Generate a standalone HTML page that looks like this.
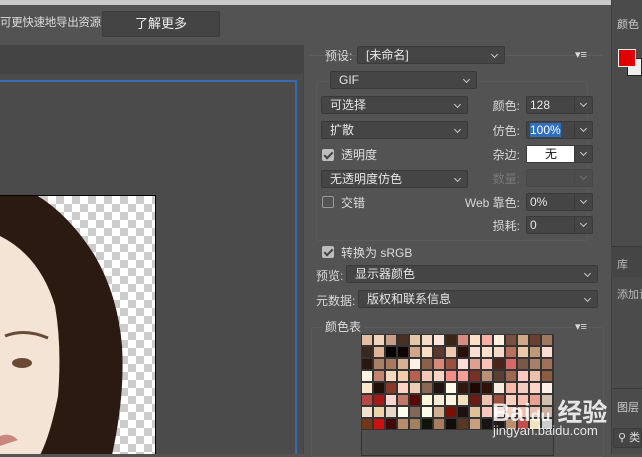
<!DOCTYPE html><html><head><meta charset="utf-8"><style>
*{margin:0;padding:0;box-sizing:border-box}
body{width:642px;height:454px;overflow:hidden;background:#535353;font-family:"Liberation Sans","Noto Sans CJK SC",sans-serif;color:#ddd;font-size:12px;position:relative}
.a{position:absolute}
.dd{position:absolute;background:#454545;border:1px solid #3a3a3a;border-radius:2px;height:18px;line-height:16px;padding-left:8px;color:#e6e6e6;font-size:12px}
.dd:after{content:"";position:absolute;right:7px;top:5px;width:4px;height:4px;border-right:1px solid #ccc;border-bottom:1px solid #ccc;transform:rotate(45deg)}
.cb{position:absolute;background:#454545;border:1px solid #3a3a3a;border-radius:2px;height:18px;line-height:16px;padding-left:3px;color:#e6e6e6}
.cb .b{position:absolute;right:0;top:0;width:18px;height:16px;border-left:1px solid #3a3a3a}
.cb .b:after{content:"";position:absolute;left:6px;top:4px;width:4px;height:4px;border-right:1px solid #ccc;border-bottom:1px solid #ccc;transform:rotate(45deg)}
.lb{position:absolute;color:#d8d8d8;font-size:12px;text-align:right}
.chk{position:absolute;width:12px;height:12px;border-radius:2px;background:#bdbdbd}
.chk:after{content:"";position:absolute;left:4px;top:1px;width:3px;height:7px;border-right:2px solid #444;border-bottom:2px solid #444;transform:rotate(45deg)}
#grid{position:absolute;left:361px;top:334px;width:193px;display:grid;grid-template-columns:repeat(16,12px);grid-auto-rows:12px;background:#333;gap:0}
#grid div{border:0.5px solid #333}
</style></head><body>
<div class="a" style="left:0;top:0;width:611px;height:5px;background:#c9c9c9"></div>
<div class="a" style="left:0;top:14px;color:#ddd;font-size:11.5px;letter-spacing:-0.3px">可更快速地导出资源</div>
<div class="a" style="left:102px;top:11px;width:118px;height:26px;background:#444;border:1px solid #3d3d3d;border-radius:2px;text-align:center;line-height:24px;font-size:13px;color:#eee">了解更多</div>
<div class="a" style="left:0;top:45px;width:304px;height:29px;background:#444"></div>
<div class="a" style="left:0;top:74px;width:304px;height:380px;background:#4b4b4b"></div>
<div class="a" style="left:0;top:80px;width:297px;height:374px;border-top:2px solid #3a6ab0;border-right:2px solid #3a6ab0"></div>
<div class="a" style="left:303px;top:45px;width:1px;height:409px;background:#444"></div>
<div class="a" style="left:0;top:195px;width:156px;height:259px;border-top:1px solid #000;border-right:1px solid #000;background-color:#fff;background-image:linear-gradient(45deg,#ccc 25%,transparent 25%,transparent 75%,#ccc 75%),linear-gradient(45deg,#ccc 25%,transparent 25%,transparent 75%,#ccc 75%);background-size:16px 16px;background-position:0 0,8px 8px;overflow:hidden">
<svg width="156" height="259" style="position:absolute;left:0;top:0"><path d="M0 0 L38 0 Q70 20 95 60 Q118 100 122 150 Q125 200 112 259 L0 259Z" fill="#2a1a12"/><path d="M0 40 Q40 60 55 110 Q62 150 58 200 Q50 240 40 259 L0 259Z" fill="#f3e4d6"/><ellipse cx="22" cy="167" rx="10" ry="5" fill="#6a4a34"/><path d="M5 140 Q25 132 48 142" stroke="#6a4a34" stroke-width="3" fill="none"/><path d="M0 240 Q10 236 18 244 L0 250Z" fill="#c88880"/></svg></div>
<div class="a" style="left:305px;top:5px;width:306px;height:449px;background:#535353"></div>
<div class="a" style="left:310px;top:55px;width:292px;height:1px;background:#5e5e5e"></div>
<div class="lb" style="left:325px;top:47px">预设:</div>
<div class="dd" style="left:357px;top:46px;width:148px">[未命名]</div>
<div class="a" style="left:575px;top:48px;font-size:11px;color:#ddd">▾≡</div>
<div class="a" style="left:316px;top:81px;width:272px;height:160px;border:1px solid #5a5a5a;border-radius:3px"></div>
<div class="dd" style="left:330px;top:71px;width:147px">GIF</div>
<div class="dd" style="left:321px;top:96px;width:147px">可选择</div>
<div class="dd" style="left:321px;top:121px;width:147px">扩散</div>
<div class="chk" style="left:322px;top:149px"></div><div class="a" style="left:341px;top:146px">透明度</div>
<div class="dd" style="left:321px;top:170px;width:147px">无透明度仿色</div>
<div class="a" style="left:322px;top:196px;width:12px;height:12px;border:1px solid #999;border-radius:2px"></div><div class="a" style="left:341px;top:194px">交错</div>
<div class="lb" style="left:460px;top:97px;width:60px">颜色:</div>
<div class="cb" style="left:526px;top:96px;width:67px">128<div class="b"></div></div>
<div class="lb" style="left:460px;top:122px;width:60px">仿色:</div>
<div class="cb" style="left:526px;top:121px;width:67px"><span style="background:#2f6fc0;color:#fff">100%</span><div class="b"></div></div>
<div class="lb" style="left:460px;top:146px;width:60px">杂边:</div>
<div class="cb" style="left:526px;top:145px;width:67px;padding:0"><span style="display:block;width:48px;height:16px;background:#fff;color:#111;text-align:center">无</span><div class="b"></div></div>
<div class="lb" style="left:460px;top:170px;width:60px;color:#777">数量:</div>
<div class="cb" style="left:526px;top:169px;width:67px;background:#4d4d4d;border-color:#474747"><div class="b" style="opacity:.3"></div></div>
<div class="lb" style="left:444px;top:194px;width:76px">Web 靠色:</div>
<div class="cb" style="left:526px;top:193px;width:67px">0%<div class="b"></div></div>
<div class="lb" style="left:460px;top:217px;width:60px">损耗:</div>
<div class="cb" style="left:526px;top:216px;width:67px">0<div class="b"></div></div>
<div class="chk" style="left:322px;top:246px"></div><div class="a" style="left:341px;top:244px">转换为 sRGB</div>
<div class="lb" style="left:316px;top:267px">预览:</div>
<div class="dd" style="left:346px;top:265px;width:252px">显示器颜色</div>
<div class="lb" style="left:316px;top:292px">元数据:</div>
<div class="dd" style="left:358px;top:290px;width:240px">版权和联系信息</div>
<div class="a" style="left:311px;top:327px;width:293px;height:130px;border:1px solid #5a5a5a;border-radius:3px"></div>
<div class="a" style="left:322px;top:318px;background:#535353;padding:0 3px">颜色表</div>
<div class="a" style="left:575px;top:320px;font-size:11px;background:#535353">▾≡</div>
<div class="a" style="left:361px;top:334px;width:193px;height:122px;border:1px solid #333;background:#4f4f4f"></div>
<div id="grid"></div>
<div class="a" style="left:611px;top:0;width:31px;height:454px;background:#4b4b4b;border-left:1px solid #3e3e3e"></div>
<div class="a" style="left:617px;top:16px;font-size:11px;color:#ccc">颜色</div>
<div class="a" style="left:627px;top:58px;width:15px;height:18px;background:#eee;border:1px solid #222"></div>
<div class="a" style="left:618px;top:49px;width:18px;height:18px;background:#e00000;border:1px solid #eee"></div>
<div class="a" style="left:611px;top:246px;width:31px;height:1px;background:#3a3a3a"></div>
<div class="a" style="left:611px;top:247px;width:31px;height:30px;background:#454545"></div>
<div class="a" style="left:617px;top:256px;font-size:11px;color:#bbb">库</div>
<div class="a" style="left:617px;top:286px;font-size:11px;color:#bbb;white-space:nowrap">添加设</div>
<div class="a" style="left:611px;top:388px;width:31px;height:1px;background:#3a3a3a"></div>
<div class="a" style="left:617px;top:399px;font-size:11px;color:#ccc">图层</div>
<div class="a" style="left:613px;top:428px;width:29px;height:20px;background:#454545;border:1px solid #3a3a3a;border-radius:2px;font-size:11px;padding-left:4px;line-height:18px;white-space:nowrap">⚲ 类</div>
<div class="a" style="left:492px;top:393px;font-size:25px;font-weight:bold;color:rgba(255,255,255,.85);white-space:nowrap">Bai<span style="font-size:16px">du</span> 经验</div>
<div class="a" style="left:493px;top:423px;font-size:13px;color:rgba(255,255,255,.85)">jingyan.baidu.com</div>
<script>
var c="e3bca2 f0d4bb c8a08a 4a3024 e6c4a8 f5dcc4 fde6d8 3a2418 d88c80 fce0c8 f8b0a4 fff0e0 7a5040 d0a888 6a4030 a07860 3a2820 e0b498 050000 100400 d4a488 f8dcc4 5a3a2c ecc8b0 2a1008 fde0d4 fce0cc f8d8c8 b87060 e8c8a8 c09878 fcdcd0 2a1810 a88068 a87860 d8b094 fff0e4 8a6048 d88878 985040 fcdcd4 e0a090 fcc0b4 4a2418 d86868 7a5848 a88068 a07058 fff4e4 c08470 f8d8c0 f4ccb0 b86050 f4c8b4 fcd4c4 f48c88 f4a098 7a3024 b89078 5a4034 a06850 fcc8c0 ecc0ac 8a5c40 fde4cc 201008 8a3828 fcd4c4 ecccb4 8a6854 201410 fffcec 301810 200800 301008 f8ece0 f8b8a8 f4ccc0 fcd4c8 fff0e8 b84848 a81818 fcd4d0 c07868 580800 fff8dc f8ecd4 fcf4e0 f0e0c0 6a1c14 f0c0b0 a05040 fcd0c0 f8c0b0 e8a090 d0c0b0 f0e0d0 ecd4a8 e8d8cc fcfcec 806858 f8fce8 d0b090 781008 201010 e0c098 f8c8c0 fce0d8 f8d0c0 ecc0a8 e8c0b0 c8b0a0 703818 d01010 400808 b88c6c a08060 101408 a87c60 100c08 583820 c8a080 181414 201c18 b89070 c05050 f0e4c0 cccccc".split(" ");
var g=document.getElementById("grid");c.forEach(function(x){var d=document.createElement("div");d.style.background="#"+x;g.appendChild(d)});
</script>
</body></html>
